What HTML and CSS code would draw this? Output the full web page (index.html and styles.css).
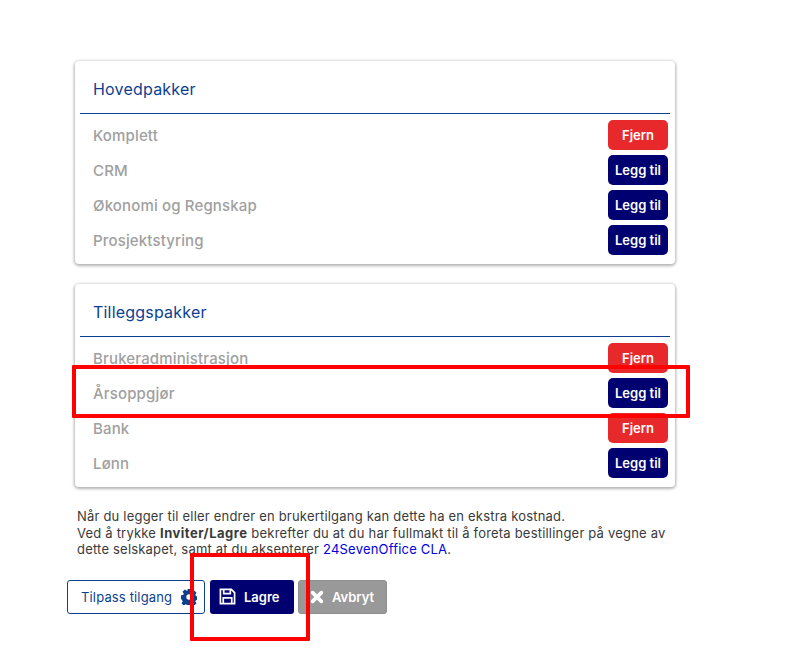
FILE: index.html
```html
<!DOCTYPE html>
<html lang="no">
<head>
    <meta charset="UTF-8">
    <meta name="viewport" content="width=device-width, initial-scale=1.0">
    <title>Brukertilgang</title>
    <link rel="stylesheet" href="styles.css">
</head>
<body>
    <main class="page">
        <section class="card">
            <h2 class="card-title">Hovedpakker</h2>
            <div class="row"><span class="row-name">Komplett</span><button class="btn-small btn-remove">Fjern</button></div>
            <div class="row"><span class="row-name">CRM</span><button class="btn-small btn-add">Legg til</button></div>
            <div class="row"><span class="row-name">Økonomi og Regnskap</span><button class="btn-small btn-add">Legg til</button></div>
            <div class="row"><span class="row-name">Prosjektstyring</span><button class="btn-small btn-add">Legg til</button></div>
        </section>

        <section class="card">
            <h2 class="card-title">Tilleggspakker</h2>
            <div class="row"><span class="row-name">Brukeradministrasjon</span><button class="btn-small btn-remove">Fjern</button></div>
            <div class="row"><span class="row-name">Årsoppgjør</span><button class="btn-small btn-add">Legg til</button></div>
            <div class="row"><span class="row-name">Bank</span><button class="btn-small btn-remove">Fjern</button></div>
            <div class="row"><span class="row-name">Lønn</span><button class="btn-small btn-add">Legg til</button></div>
        </section>

        <p class="note">
            Når du legger til eller endrer en brukertilgang kan dette ha en ekstra kostnad.<br>
            Ved å trykke <strong>Inviter/Lagre</strong> bekrefter du at du har fullmakt til å foreta bestillinger på vegne av<br>
            dette selskapet, samt at du aksepterer <a href="#">24SevenOffice CLA</a>.
        </p>

        <div class="actions">
            <button class="btn btn-outline">Tilpass tilgang
                <svg class="icon-gear" viewBox="0 0 24 24"><path fill="currentColor" fill-rule="evenodd" d="M9.500 0h5l.6 3.300c.7.2 1.300.5 1.900.9l2.800-1.900 3.500 3.500-1.900 2.800c.4.600.7 1.200.9 1.900l3.300.6v5l-3.300.6c-.2.700-.5 1.300-.9 1.900l1.900 2.800-3.500 3.500-2.800-1.900c-.6.400-1.200.7-1.900.9l-.6 2.800h-5l-.6-2.800c-.7-.2-1.300-.5-1.900-.9l-2.800 1.900-3.500-3.500 1.900-2.800c-.4-.6-.7-1.200-.9-1.900L0 14.500v-5l3.300-.6c.2-.7.5-1.300.9-1.900L2.300 4.200l3.500-3.500L8.600 2.600c.6-.4 1.200-.7 1.900-.9zM12 8a4 4 0 1 0 0 8 4 4 0 0 0 0-8z"/></svg>
            </button>
            <button class="btn btn-save">
                <svg class="icon-save" viewBox="0 0 18 18"><path fill="none" stroke="currentColor" stroke-width="1.800" d="M1.500 1.500h11.500l3.500 3.500v11.500h-15z"/><path fill="none" stroke="currentColor" stroke-width="1.800" d="M5 1.500v4.500h7V1.500M4.500 16.500v-6h9v6"/></svg>
                Lagre
            </button>
            <button class="btn btn-cancel">
                <svg class="icon-x" viewBox="0 0 16 16"><path fill="none" stroke="currentColor" stroke-width="4.200" stroke-linecap="round" d="M3 3l10 10M13 3L3 13"/></svg>
                Avbryt
            </button>
        </div>
    </main>

    <!-- red markings on top of the page -->
    <div class="mark mark-row"></div>
    <div class="mark mark-save"></div>
</body>
</html>
```
FILE: styles.css
```css
body {
    margin: 0;
    background-color: #fff;
    font-family: "Inter", "Open Sans", sans-serif;
    color: #333;
}
.page {
    width: 600px;
    margin-left: 75px;
    padding-top: 61px;
}
.card {
    height: 203px;
    box-sizing: border-box;
    margin-bottom: 20px;
    padding: 0 5px;
    background-color: #fff;
    border-radius: 4px;
    box-shadow: 0 1px 3px 1px rgba(0, 0, 0, 0.3);
}
.card-title {
    height: 53px;
    box-sizing: border-box;
    margin: 0 0 4px;
    padding: 18px 0 0 13px;
    border-bottom: 1px solid #0d3f8f;
    font-size: 16px;
    font-weight: 400;
    line-height: 20px;
    letter-spacing: 0.2px;
    color: #0d3f8f;
}
.row {
    display: flex;
    justify-content: space-between;
    align-items: center;
    height: 35px;
    padding: 0 2px 0 13px;
}
.row-name {
    font-size: 15px;
    font-weight: 500;
    letter-spacing: 0.15px;
    color: #a0a0a0;
}
.btn-small {
    width: 60px;
    height: 30px;
    margin-bottom: 1px;
    padding: 0;
    border: none;
    border-radius: 5px;
    font-family: inherit;
    font-size: 13px;
    font-weight: 600;
    color: #fff;
}
.btn-remove {
    background-color: #e8292c;
}
.btn-add {
    background-color: #000070;
}
.note {
    margin: 21px 0 0 2px;
    width: 610px;
    font-size: 13px;
    line-height: 16.500px;
    letter-spacing: 0.2px;
    color: #3a3a3a;
}
.note strong {
    font-weight: 700;
    letter-spacing: 0.5px;
}
.note a {
    color: #0000e0;
    text-decoration: none;
}
.actions {
    display: flex;
    margin: 22px 0 0 -8px;
}
.btn {
    display: flex;
    align-items: center;
    height: 34px;
    box-sizing: border-box;
    border-radius: 3px;
    font-family: inherit;
    font-size: 13px;
}
.btn-outline {
    width: 138px;
    margin-right: 5px;
    padding: 0 0 0 13px;
    background-color: #fff;
    border: 1px solid #0d3f8f;
    letter-spacing: 0.15px;
    color: #0d3f8f;
}
.btn-save {
    width: 84px;
    margin-right: 4px;
    padding: 0 0 0 9px;
    background-color: #000070;
    border: none;
    font-weight: 600;
    color: #fff;
}
.btn-cancel {
    width: 89px;
    padding: 0 0 0 11px;
    background-color: #999;
    border: 1px solid #8f8f8f;
    font-weight: 600;
    color: #fff;
}
.icon-gear {
    width: 16px;
    height: 16px;
    margin-left: 9px;
}
.icon-save {
    width: 17px;
    height: 17px;
    margin-right: 8px;
}
.icon-x {
    width: 14px;
    height: 14px;
    margin-right: 8px;
}
.mark {
    position: absolute;
    box-sizing: border-box;
    border: 4px solid #f00;
    border-radius: 1px;
}
.mark-row {
    left: 72px;
    top: 365px;
    width: 618px;
    height: 53px;
}
.mark-save {
    left: 190px;
    top: 553px;
    width: 120px;
    height: 88px;
}
```
